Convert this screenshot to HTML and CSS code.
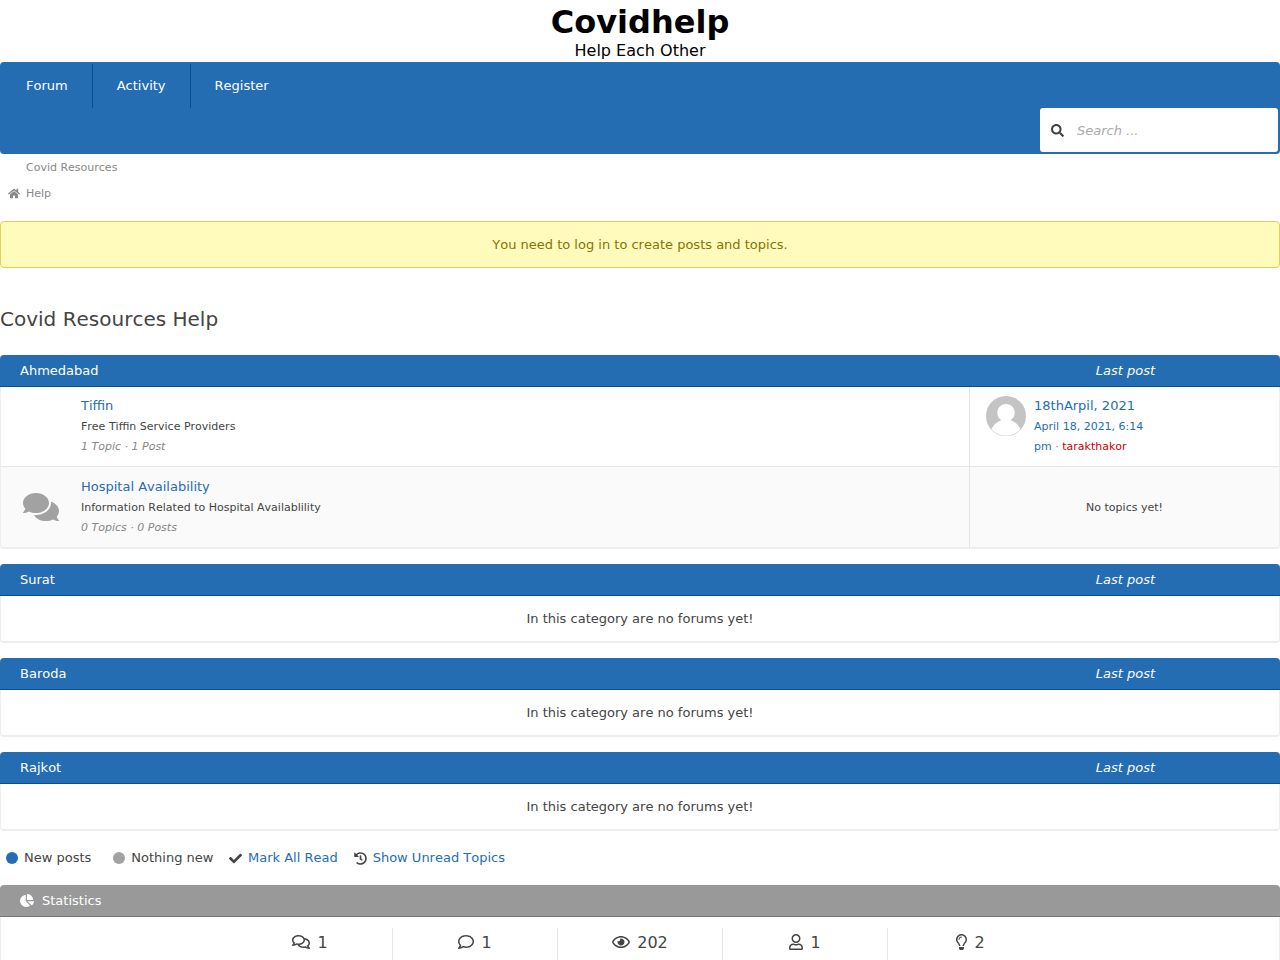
FILE: index.html
```html
<!DOCTYPE html>
<html lang="en">
<head>
<meta charset="utf-8">
<title>Covidhelp</title>
<link rel="stylesheet" href="styles.css">
</head>
<body>
<header class="site-header">
  <h1 class="site-title">Covidhelp</h1>
  <p class="site-tagline">Help Each Other</p>
</header>

<nav class="nav">
  <div class="menu">
    <a class="menu-item">Forum</a>
    <a class="menu-item">Activity</a>
    <a class="menu-item">Register</a>
  </div>
  <label class="search">
    <svg class="search-icon" viewBox="0 0 512 512"><path d="M505 442.7L405.3 343c-4.5-4.5-10.6-7-17-7H372c27.6-35.3 44-79.7 44-128C416 93.1 322.9 0 208 0S0 93.1 0 208s93.1 208 208 208c48.3 0 92.7-16.4 128-44v16.3c0 6.4 2.5 12.5 7 17l99.7 99.7c9.4 9.4 24.6 9.4 33.9 0l28.3-28.3c9.4-9.4 9.4-24.6.1-34zM208 336c-70.7 0-128-57.2-128-128 0-70.7 57.2-128 128-128 70.7 0 128 57.2 128 128 0 70.7-57.2 128-128 128z"/></svg>
    <input class="search-input" type="text" placeholder="Search ...">
  </label>
</nav>

<div class="breadcrumbs">
  <svg class="home-icon" viewBox="0 0 576 512"><path d="M280.37 148.26L96 300.11V464a16 16 0 0 0 16 16l112.06-.29a16 16 0 0 0 15.92-16V368a16 16 0 0 1 16-16h64a16 16 0 0 1 16 16v95.64a16 16 0 0 0 16 16.05L464 480a16 16 0 0 0 16-16V300L295.67 148.26a12.19 12.19 0 0 0-15.3 0zM571.6 251.47L488 182.56V44.05a12 12 0 0 0-12-12h-56a12 12 0 0 0-12 12v72.61L318.47 43a48 48 0 0 0-61 0L4.34 251.47a12 12 0 0 0-1.6 16.9l25.5 31A12 12 0 0 0 45.15 301l235.22-193.74a12.19 12.19 0 0 1 15.3 0L530.9 301a12 12 0 0 0 16.9-1.6l25.5-31a12 12 0 0 0-1.7-16.93z"/></svg>
  <a class="crumb">Covid Resources<br>Help</a>
</div>

<div class="notice">You need to log in to create posts and topics.</div>

<h2 class="page-title">Covid Resources Help</h2>

<section class="category">
  <div class="bar"><span class="bar-name">Ahmedabad</span><span class="bar-last">Last post</span></div>
  <div class="forums">
    <div class="forum">
      <div class="forum-status"></div>
      <div class="forum-info">
        <a class="forum-name">Tiffin</a>
        <div class="forum-desc">Free Tiffin Service Providers</div>
        <div class="forum-stats">1 Topic · 1 Post</div>
      </div>
      <div class="last-post">
        <svg class="avatar" viewBox="0 0 40 40"><circle cx="20" cy="20" r="20" fill="#c4c4c4"/><path fill="#fff" d="M20 8c-5 0-8.700 3.700-8.700 8.700 0 3.300 1.700 6.200 4.300 7.600C10 26 6 30.500 4.700 35.500A19.500 19.500 0 0 0 35.300 35.500C34 30.500 30 26 24.400 24.300c2.600-1.400 4.300-4.300 4.300-7.600C28.700 11.700 25 8 20 8z"/><path d="M4.500 32.500A19.700 19.700 0 0 0 35.500 32.500" fill="none" stroke="#c4c4c4" stroke-width=".6"/></svg>
        <div class="last-post-text">
          <a class="last-topic">18thArpil, 2021</a>
          <div class="last-meta"><a class="last-date">April 18, 2021, 6:14<br>pm</a> · <a class="last-user">tarakthakor</a></div>
        </div>
      </div>
    </div>
    <div class="forum forum-alt">
      <div class="forum-status"><svg class="status-icon" viewBox="0 0 576 512"><path d="M416 192c0-88.400-93.100-160-208-160S0 103.600 0 192c0 34.300 14.100 65.900 38 92-13.400 30.200-35.500 54.200-35.800 54.500-2.200 2.300-2.800 5.700-1.500 8.700S4.800 352 8 352c36.600 0 66.900-12.300 88.700-25 32.200 15.700 70.300 25 111.300 25 114.900 0 208-71.600 208-160zm122 220c23.900-26 38-57.700 38-92 0-66.900-53.500-124.200-129.300-148.100.9 6.600 1.300 13.300 1.300 20.100 0 105.900-107.700 192-240 192-10.800 0-21.300-.8-31.700-1.900C207.800 439.600 281.800 480 368 480c41 0 79.100-9.200 111.300-25 21.800 12.700 52.100 25 88.700 25 3.200 0 6.100-1.900 7.300-4.800 1.300-2.900.7-6.300-1.500-8.700-.3-.3-22.400-24.200-35.800-54.500z"/></svg></div>
      <div class="forum-info">
        <a class="forum-name">Hospital Availability</a>
        <div class="forum-desc">Information Related to Hospital Availablility</div>
        <div class="forum-stats">0 Topics · 0 Posts</div>
      </div>
      <div class="last-post last-post-empty">No topics yet!</div>
    </div>
  </div>
</section>

<section class="category">
  <div class="bar"><span class="bar-name">Surat</span><span class="bar-last">Last post</span></div>
  <div class="forums"><div class="empty">In this category are no forums yet!</div></div>
</section>
<section class="category">
  <div class="bar"><span class="bar-name">Baroda</span><span class="bar-last">Last post</span></div>
  <div class="forums"><div class="empty">In this category are no forums yet!</div></div>
</section>
<section class="category">
  <div class="bar"><span class="bar-name">Rajkot</span><span class="bar-last">Last post</span></div>
  <div class="forums"><div class="empty">In this category are no forums yet!</div></div>
</section>

<div class="legend">
  <span class="legend-item legend-new"><i class="dot dot-new"></i>New posts</span>
  <span class="legend-item legend-old"><i class="dot"></i>Nothing new</span>
  <span class="legend-item legend-mark"><svg class="legend-icon" viewBox="0 0 512 512"><path d="M173.898 439.404l-166.400-166.400c-9.997-9.997-9.997-26.206 0-36.204l36.203-36.204c9.997-9.998 26.207-9.998 36.204 0L192 312.690 432.095 72.596c9.997-9.997 26.207-9.997 36.204 0l36.203 36.204c9.997 9.997 9.997 26.206 0 36.204l-294.400 294.401c-9.998 9.997-26.207 9.997-36.204-.001z"/></svg><a class="link">Mark All Read</a></span>
  <span class="legend-item"><svg class="legend-icon" viewBox="0 0 512 512"><path d="M504 255.531c.253 136.640-111.180 248.372-247.820 248.468-59.015.042-113.223-20.530-155.822-54.911-11.077-8.940-11.905-25.541-1.839-35.607l11.267-11.267c8.609-8.609 22.353-9.551 31.891-1.984C173.062 425.135 212.781 440 256 440c101.705 0 184-82.311 184-184 0-101.705-82.311-184-184-184-48.814 0-93.149 18.969-126.068 49.932l50.754 50.754c10.080 10.080 2.941 27.314-11.313 27.314H24c-8.837 0-16-7.163-16-16V38.627c0-14.254 17.234-21.393 27.314-11.314l49.372 49.372C129.209 34.136 189.552 8 256 8c136.810 0 247.747 110.780 248 247.531zm-180.912 78.784l9.823-12.630c8.138-10.463 6.253-25.542-4.210-33.679L288 256.349V152c0-13.255-10.745-24-24-24h-16c-13.255 0-24 10.745-24 24v135.651l65.409 50.874c10.463 8.137 25.541 6.253 33.679-4.210z"/></svg><a class="link">Show Unread Topics</a></span>
</div>

<section class="statistics">
  <div class="bar bar-gray"><svg class="pie-icon" viewBox="0 0 544 512"><path d="M527.790 288H290.500l158.030 158.030c6.040 6.040 15.980 6.530 22.190.68 38.700-36.460 65.320-85.610 73.130-140.860 1.340-9.460-6.510-17.850-16.060-17.850zm-15.830-64.800C503.720 103.740 408.260 8.280 288.800.04 279.680-.59 272 7.100 272 16.240V240h223.770c9.140 0 16.820-7.680 16.190-16.800zM224 288V50.710c0-9.550-8.390-17.400-17.840-16.060C86.990 51.490-4.100 155.600.14 280.370 4.500 408.510 114.830 513.590 243.030 511.980c50.400-.63 96.970-16.870 135.260-44.030 7.900-5.600 8.420-17.230 1.570-24.080L224 288z"/></svg>Statistics</div>
  <div class="stats">
    <div class="stat"><svg class="stat-icon wide" viewBox="0 0 576 512"><path d="M532 386.200c27.500-27.100 44-61.100 44-98.200 0-80-76.500-146.100-176.200-157.900C368.300 72.500 294.300 32 208 32 93.100 32 0 103.600 0 192c0 37 16.500 71 44 98.200-15.300 30.700-37.300 54.500-37.700 54.900-6.300 6.700-8.100 16.500-4.400 25 3.600 8.500 12 14 21.200 14 53.500 0 96.700-20.200 125.200-38.800 9.200 2.100 18.700 3.700 28.400 4.900C208.100 407.600 281.800 448 368 448c20.800 0 40.800-2.400 59.800-6.800C456.300 459.700 499.400 480 553 480c9.200 0 17.500-5.500 21.200-14 3.600-8.500 1.900-18.300-4.400-25-.4-.3-22.500-24.100-37.800-54.800zm-392.800-92.300L122.100 305c-14.100 9.100-28.500 16.300-43.100 21.400 2.700-4.700 5.400-9.700 8-14.800l15.500-31.100L77.700 256C64.200 242.600 48 220.700 48 192c0-60.700 73.300-112 160-112s160 51.300 160 112-73.300 112-160 112c-16.500 0-33-1.900-49-5.600l-19.800-4.500zM498.300 352l-24.700 24.400 15.500 31.100c2.600 5.100 5.300 10.100 8 14.800-14.600-5.100-29-12.300-43.100-21.400l-17.100-11.100-19.900 4.600c-16 3.700-32.500 5.600-49 5.600-54 0-102.200-20.100-131.300-49.700C338 339.500 416 272.900 416 192c0-3.400-.4-6.700-.7-10C479.700 196.500 528 238.800 528 288c0 28.700-16.200 50.600-29.700 64z"/></svg><span class="stat-value">1</span></div>
    <div class="stat"><svg class="stat-icon" viewBox="0 0 512 512"><path d="M256 32C114.600 32 0 125.100 0 240c0 47.600 19.900 91.200 52.900 126.300C38 405.700 7 439.100 6.500 439.500c-6.600 7-8.400 17.200-4.600 26S14.400 480 24 480c61.500 0 110-25.700 139.100-46.300C192 442.800 223.200 448 256 448c141.400 0 256-93.100 256-208S397.400 32 256 32zm0 368c-26.700 0-53.100-4.100-78.400-12.100l-22.700-7.200-19.500 13.800c-14.300 10.100-33.900 21.400-57.500 29 7.300-12.100 14.400-25.700 19.900-40.200l10.600-28.100-20.600-21.800C69.700 314.100 48 282.200 48 240c0-88.200 93.300-160 208-160s208 71.800 208 160-93.300 160-208 160z"/></svg><span class="stat-value">1</span></div>
    <div class="stat"><svg class="stat-icon wide" viewBox="0 0 576 512"><path d="M288 144a110.940 110.940 0 0 0-31.240 5 55.400 55.400 0 0 1 7.240 27 56 56 0 0 1-56 56 55.400 55.400 0 0 1-27-7.240A111.710 111.710 0 1 0 288 144zm284.520 97.400C518.290 135.590 410.930 64 288 64S57.680 135.640 3.480 241.410a32.350 32.350 0 0 0 0 29.190C57.710 376.410 165.070 448 288 448s230.320-71.640 284.520-177.410a32.350 32.350 0 0 0 0-29.190zM288 400c-98.650 0-189.090-55-237.930-144C98.910 167 189.340 112 288 112s189.090 55 237.930 144C477.100 345 386.660 400 288 400z"/></svg><span class="stat-value">202</span></div>
    <div class="stat"><svg class="stat-icon user" viewBox="0 0 448 512"><path d="M313.600 304c-28.700 0-42.500 16-89.600 16-47.100 0-60.800-16-89.600-16C60.200 304 0 364.200 0 438.400V464c0 26.500 21.500 48 48 48h352c26.500 0 48-21.500 48-48v-25.600c0-74.200-60.200-134.400-134.400-134.400zM400 464H48v-25.600c0-47.600 38.800-86.400 86.400-86.400 14.600 0 38.300 16 89.600 16 51.700 0 74.900-16 89.600-16 47.600 0 86.400 38.800 86.400 86.400V464zM224 288c79.500 0 144-64.500 144-144S303.500 0 224 0 80 64.500 80 144s64.500 144 144 144zm0-240c52.900 0 96 43.100 96 96s-43.100 96-96 96-96-43.100-96-96 43.100-96 96-96z"/></svg><span class="stat-value">1</span></div>
    <div class="stat"><svg class="stat-icon bulb" viewBox="0 0 352 512"><path d="M176 80c-52.940 0-96 43.060-96 96 0 8.840 7.160 16 16 16s16-7.160 16-16c0-35.300 28.720-64 64-64 8.840 0 16-7.160 16-16s-7.160-16-16-16zM96.060 459.170c0 3.150.93 6.220 2.680 8.840l24.510 36.840c2.970 4.460 7.970 7.140 13.320 7.140h78.850c5.360 0 10.360-2.680 13.320-7.140l24.510-36.840c1.740-2.620 2.670-5.700 2.680-8.840l.05-43.180H96.020l.04 43.180zM176 0C73.720 0 0 82.970 0 176c0 44.370 16.450 84.850 43.560 115.780 16.640 18.990 42.740 58.800 52.420 92.160v.06h48v-.12c-.01-4.770-.72-9.510-2.150-14.070-5.590-17.810-22.820-64.770-62.170-109.670-20.540-23.430-31.520-53.150-31.610-84.140-.2-73.640 59.670-128 127.950-128 70.580 0 128 57.420 128 128 0 30.970-11.240 60.850-31.650 84.140-39.110 44.610-56.420 91.470-62.100 109.460a47.507 47.507 0 0 0-2.220 14.300v.1h48v-.05c9.680-33.370 35.780-73.180 52.420-92.160C335.550 260.850 352 220.370 352 176 352 78.800 273.200 0 176 0z"/></svg><span class="stat-value">2</span></div>
  </div>
</section>
</body>
</html>
```
FILE: styles.css
```css
* { box-sizing: border-box; }
html { height: 960px; overflow: hidden; }
body {
  margin: 0;
  height: 960px;
  overflow: hidden;
  background: #fff;
  color: #444;
  font-family: "DejaVu Sans", sans-serif;
  font-size: 13px;
  line-height: 20px;
  font-kerning: none;
}
svg { display: block; flex: none; fill: currentColor; }

.site-header { height: 62px; padding-top: 3px; color: #000; text-align: center; }
.site-title { margin: 0; font-size: 32px; line-height: 39px; }
.site-tagline { margin: 0; font-size: 16px; line-height: 17px; }

.nav { padding: 2px; background: #256db3; border-radius: 4px; }
.menu { display: flex; }
.menu-item { padding: 0 24px; line-height: 44px; color: #fff; border-right: 1px solid #044e94; }
.menu-item:last-child { border-right: 0; }
.search {
  display: flex;
  align-items: center;
  width: 238px;
  height: 44px;
  margin-left: auto;
  padding-left: 11px;
  background: #fff;
  border-radius: 3px;
}
.search-icon { width: 13px; height: 13px; }
.search-input { width: 190px; margin-left: 13px; padding: 0; border: 0; outline: 0; background: none; font: italic 13px "DejaVu Sans", sans-serif; }
.search-input::placeholder { color: #a9a9a9; }

.breadcrumbs { display: flex; align-items: flex-end; padding: 1px 8px 0; color: #888; font-size: 11px; line-height: 26px; }
.home-icon { width: 12px; height: 11px; margin: 0 6px 8px 0; }

.notice {
  margin-top: 14px;
  padding: 13px 0 12px;
  border: 1px solid #e0cf50;
  border-radius: 4px;
  background: #fffbbd;
  color: #857500;
  text-align: center;
}
.page-title { margin: 36px 0 21px; font-size: 20px; font-weight: 400; line-height: 30px; }

.category { margin-bottom: 15px; }
.bar {
  display: flex;
  align-items: center;
  height: 32px;
  padding-left: 20px;
  background: #256db3;
  border-bottom: 1px solid #044e94;
  border-radius: 4px 4px 0 0;
  color: #fff;
}
.bar-name { flex: 1; }
.bar-last { width: 309px; text-align: center; font-style: italic; }
.forums { border: 1px solid #eee; border-top: 0; border-bottom-width: 2px; border-radius: 0 0 4px 4px; overflow: hidden; }
.forum { display: flex; height: 80px; border-bottom: 1px solid #e6e6e6; }
.forum-alt { background: #fafafa; border-bottom: 0; }
.forum-status { display: flex; align-items: center; justify-content: center; width: 80px; }
.status-icon { width: 36px; height: 32px; color: #a2a2a2; }
.forum-info { flex: 1; padding-top: 9px; }
.forum-alt .forum-info { padding-top: 10px; }
.forum-name { display: block; color: #256db3; }
.forum-desc { margin-top: 1px; font-size: 11px; }
.forum-stats { color: #888; font-size: 11px; font-style: italic; }
.last-post { display: flex; width: 310px; padding: 9px 16px 0; border-left: 1px solid #e6e6e6; }
.last-post-empty { align-items: center; justify-content: center; padding-top: 2px; font-size: 11px; }
.avatar { width: 40px; height: 40px; margin-right: 8px; }
.last-topic { display: block; color: #256db3; }
.last-meta { margin-top: 1px; color: #888; font-size: 11px; }
.last-date { color: #256db3; }
.last-user { color: #c00; }
.empty { padding: 13px 0 12px; text-align: center; }

.legend { display: flex; padding: 2px 0 17px 6px; }
.legend-item { display: flex; align-items: center; }
.legend-new { margin-right: 22px; }
.legend-old { margin-right: 15.5px; }
.legend-mark { margin-right: 16px; }
.dot { width: 12px; height: 12px; margin-right: 6px; border-radius: 50%; background: #a2a2a2; }
.dot-new { background: #256db3; }
.legend-icon { width: 13px; height: 13px; margin-right: 6px; }
.link { color: #256db3; }

.bar-gray { background: #999; border-bottom-color: #777; }
.pie-icon { width: 14px; height: 13px; margin-right: 8px; }
.stats { display: flex; justify-content: center; padding: 11px 0; border: 1px solid #eee; border-top: 0; }
.stat { display: flex; align-items: center; justify-content: center; width: 165px; height: 48px; padding: 0 0 20px 1px; border-right: 1px solid #e6e6e6; font-size: 16px; }
.stat:last-child { border-right: 0; }
.stat-icon { width: 16px; height: 16px; margin-right: 7px; }
.stat-value { padding-top: 2px; }
.wide { width: 18px; }
.user { width: 14px; }
.bulb { width: 11px; }
```
